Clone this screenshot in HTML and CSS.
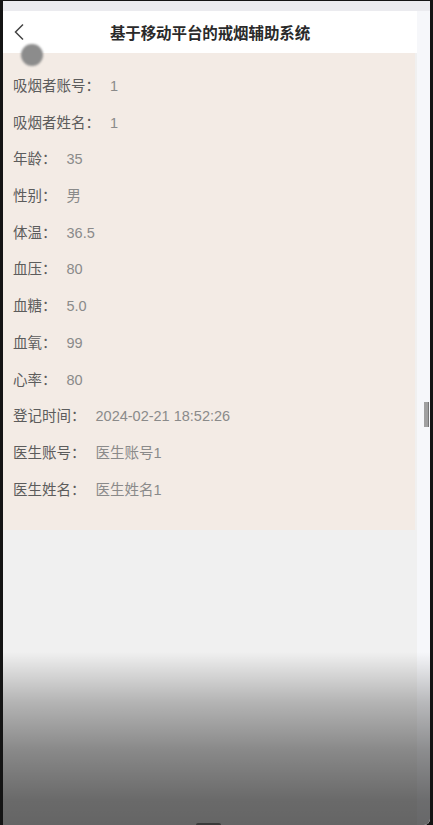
FILE: index.html
```html
<!DOCTYPE html>
<html lang="zh-CN">
  <head>
    <meta charset="UTF-8" />
    <meta name="viewport" content="width=device-width, initial-scale=1.0" />
    <title>基于移动平台的戒烟辅助系统</title>
    <link rel="stylesheet" href="styles.css">
  </head>
  <body>
    <div class="phone">
      <div class="status-bar"></div>
      <div class="screen">
        <div class="page">
          <div class="header">
            <span class="back">
              <svg width="12" height="18" viewBox="0 0 12 18">
                <path d="M10 1.5 L2.5 9 L10 16.5" fill="none" stroke="#444" stroke-width="1.5" />
              </svg>
            </span>
            <h1 class="title">基于移动平台的戒烟辅助系统</h1>
          </div>
          <div class="detail">
            <div class="row"><span class="label">吸烟者账号：</span><span class="value">1</span></div>
            <div class="row"><span class="label">吸烟者姓名：</span><span class="value">1</span></div>
            <div class="row"><span class="label">年龄：</span><span class="value">35</span></div>
            <div class="row"><span class="label">性别：</span><span class="value">男</span></div>
            <div class="row"><span class="label">体温：</span><span class="value">36.5</span></div>
            <div class="row"><span class="label">血压：</span><span class="value">80</span></div>
            <div class="row"><span class="label">血糖：</span><span class="value">5.0</span></div>
            <div class="row"><span class="label">血氧：</span><span class="value">99</span></div>
            <div class="row"><span class="label">心率：</span><span class="value">80</span></div>
            <div class="row"><span class="label">登记时间：</span><span class="value">2024-02-21 18:52:26</span></div>
            <div class="row"><span class="label">医生账号：</span><span class="value">医生账号1</span></div>
            <div class="row"><span class="label">医生姓名：</span><span class="value">医生姓名1</span></div>
          </div>
        </div>
        <div class="rail"></div>
      </div>
      <!-- overlays from the screen recording -->
      <div class="touch-dot"></div>
      <div class="scroll-thumb"></div>
      <div class="fade"></div>
      <div class="home-bar"></div>
    </div>
  </body>
</html>
```

FILE: styles.css
```css
html,
body {
  margin: 0;
  height: 825px;
  overflow: hidden;
}
body {
  background: #141414;
  font-family: "Noto Sans CJK SC", "Liberation Sans", sans-serif;
}
.phone {
  position: relative;
  margin: 1px 3px 0;
  height: 824px;
  display: flex;
  flex-direction: column;
  background: #f0f0f0;
  overflow: hidden;
  border-bottom-right-radius: 6px;
}
.status-bar {
  height: 10px;
  background: #ebebef;
}
.screen {
  flex: 1;
  display: flex;
}
.page {
  flex: 1;
  background: #f0f0f0;
}
.rail {
  width: 13px;
  background: #f6f7fa;
}
.header {
  position: relative;
  height: 42px;
  background: #fff;
  display: flex;
  align-items: center;
  justify-content: center;
}
.back {
  position: absolute;
  left: 10px;
  top: 12px;
  display: flex;
}
.title {
  margin: 0;
  font-size: 15.5px;
  font-weight: bold;
  color: #2a2a2a;
  letter-spacing: -0.1px;
}
.detail {
  background: #f3ebe5;
  margin-right: 2px;
  padding: 14px 10px 23px;
}
.row {
  height: 36.7px;
  line-height: 36.7px;
  font-size: 14.5px;
  white-space: nowrap;
}
.label {
  color: #5c5c5c;
}
.value {
  margin-left: 10px;
  color: #8a8a8a;
  font-family: "Liberation Sans", "Noto Sans CJK SC", sans-serif;
}
.touch-dot {
  position: absolute;
  left: 18px;
  top: 43px;
  width: 22px;
  height: 22px;
  border-radius: 50%;
  background: #8c8c8c;
  filter: blur(0.8px);
}
.scroll-thumb {
  position: absolute;
  left: 421px;
  top: 401px;
  width: 4px;
  height: 25px;
  background: #a0a0a0;
  border-right: 1px solid #777;
}
.fade {
  position: absolute;
  left: 0;
  right: 0;
  top: 651px;
  bottom: 0;
  background: linear-gradient(
    to bottom,
    rgba(0, 0, 0, 0) 0%,
    rgba(0, 0, 0, 0.25) 29%,
    rgba(0, 0, 0, 0.43) 57%,
    rgba(0, 0, 0, 0.56) 86%,
    rgba(0, 0, 0, 0.58) 100%
  );
}
.home-bar {
  position: absolute;
  left: 193px;
  bottom: 0;
  width: 25px;
  height: 2px;
  background: #3a3a3a;
  border-radius: 2px 2px 0 0;
}
```
